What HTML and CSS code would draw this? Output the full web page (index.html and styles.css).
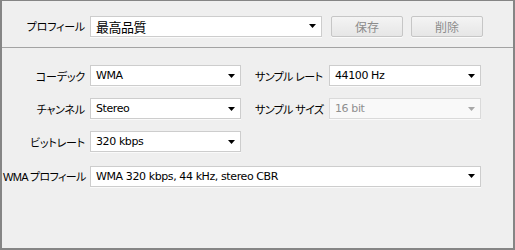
FILE: index.html
```html
<!DOCTYPE html>
<html lang="ja">
<head>
    <meta charset="UTF-8">
    <title>エンコード設定</title>
    <link rel="stylesheet" href="styles.css">
</head>
<body>
    <div class="panel">
        <div class="top">
            <label class="label">プロフィール</label>
            <div class="combo profile">
                <span class="big">最高品質</span>
                <svg class="arrow" viewBox="0 0 7 4"><path d="M0 0h7L3.5 4z"/></svg>
            </div>
            <button class="btn" disabled>保存</button>
            <button class="btn" disabled>削除</button>
        </div>
        <div class="form">
            <label class="label">コーデック</label>
            <div class="combo">
                <span>WMA</span>
                <svg class="arrow" viewBox="0 0 7 4"><path d="M0 0h7L3.5 4z"/></svg>
            </div>
            <label class="label side">サンプル レート</label>
            <div class="combo">
                <span>44100 Hz</span>
                <svg class="arrow" viewBox="0 0 7 4"><path d="M0 0h7L3.5 4z"/></svg>
            </div>

            <label class="label">チャンネル</label>
            <div class="combo">
                <span>Stereo</span>
                <svg class="arrow" viewBox="0 0 7 4"><path d="M0 0h7L3.5 4z"/></svg>
            </div>
            <label class="label side">サンプル サイズ</label>
            <div class="combo disabled">
                <span>16 bit</span>
                <svg class="arrow" viewBox="0 0 7 4"><path d="M0 0h7L3.5 4z"/></svg>
            </div>

            <label class="label">ビットレート</label>
            <div class="combo">
                <span>320 kbps</span>
                <svg class="arrow" viewBox="0 0 7 4"><path d="M0 0h7L3.5 4z"/></svg>
            </div>

            <label class="label wma">WMA プロフィール</label>
            <div class="combo wide">
                <span>WMA 320 kbps, 44 kHz, stereo CBR</span>
                <svg class="arrow" viewBox="0 0 7 4"><path d="M0 0h7L3.5 4z"/></svg>
            </div>
        </div>
    </div>
</body>
</html>
```

FILE: styles.css
```css
body {
    margin: 0;
    background: #efefef;
    font-family: "Liberation Sans", "Noto Sans CJK JP", sans-serif;
    font-size: 12px;
    color: #000;
}
.panel {
    width: 515px;
    height: 250px;
    box-sizing: border-box;
    border: 2px solid #858585;
    border-top-width: 1px;
    background: #efefef;
}
.top {
    display: flex;
    align-items: center;
    height: 47px;
    box-sizing: border-box;
    padding-top: 4px;
    border-bottom: 1px solid #a3a3a3;
}
.label {
    width: 83px;
    padding-right: 5px;
    text-align: right;
    white-space: nowrap;
    font-size: 11px;
    font-feature-settings: "palt";
    letter-spacing: -0.2px;
}
.combo {
    display: flex;
    align-items: center;
    justify-content: space-between;
    height: 21px;
    box-sizing: border-box;
    padding: 0 5px 0 5px;
    background: #fff;
    border: 1px solid #cdcdcd;
    box-shadow: 0 1px 0 #fafafa;
    white-space: nowrap;
}
.combo span {
    font-family: "DejaVu Sans", "Noto Sans CJK JP", sans-serif;
    font-size: 11px;
    letter-spacing: -0.4px;
}
.combo .big {
    font-family: "Noto Sans CJK JP", sans-serif;
    font-size: 13px;
    letter-spacing: -0.5px;
}
.arrow {
    width: 7px;
    height: 4px;
    fill: #000;
}
.profile {
    width: 232px;
}
.btn {
    width: 72px;
    height: 21px;
    margin-left: 8px;
    padding: 0;
    font-family: "Noto Sans CJK JP", sans-serif;
    font-size: 12px;
    color: #8c8c8c;
    background: linear-gradient(#f4f4f4, #e6e6e6);
    border: 1px solid #c6c6c6;
    border-radius: 2px;
    box-shadow: 0 1px 0 #fbfbfb;
}
.btn:first-of-type {
    margin-left: 9px;
}
.form {
    display: grid;
    grid-template-columns: 88px 151px 88px 152px;
    grid-auto-rows: 21px;
    row-gap: 12px;
    align-items: center;
    padding-top: 17px;
}
.label.side {
    width: auto;
    padding: 0 0 0 14px;
    text-align: left;
    letter-spacing: -0.6px;
}
.combo.disabled {
    background: #f9f9f9;
    border-color: #dadada;
    color: #8f8f8f;
}
.combo.disabled .arrow {
    fill: #a8a8a8;
}
.label.wma {
    grid-column: 1;
    width: auto;
    padding: 0 0 0 1px;
    text-align: left;
    margin-top: 3px;
    letter-spacing: -0.6px;
}
.combo.wide {
    grid-column: 2 / 5;
    margin-top: 3px;
}
```
